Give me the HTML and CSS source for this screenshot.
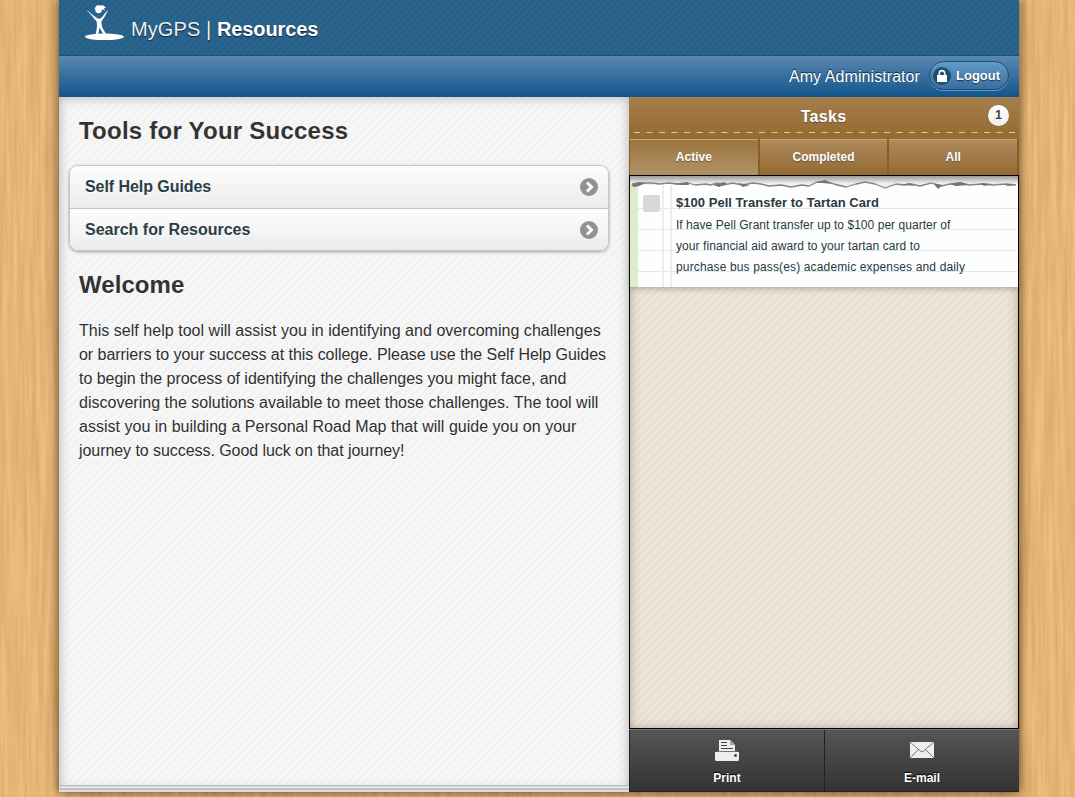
FILE: index.html
```html
<!DOCTYPE html>
<html lang="en">
<head>
<meta charset="utf-8">
<title>MyGPS | Resources</title>
<link rel="stylesheet" href="styles.css">
</head>
<body>
<svg class="wood" width="1075" height="797" aria-hidden="true">
  <filter id="grain" x="0" y="0" width="100%" height="100%" color-interpolation-filters="sRGB">
    <feTurbulence type="fractalNoise" baseFrequency="0.22 0.008" numOctaves="4" seed="7"/>
    <feColorMatrix values="0 0 0 0 0.76  0 0 0 0 0.53  0 0 0 0 0.26  0.7 0 0 0 -0.18"/>
  </filter>
  <rect width="1075" height="797" filter="url(#grain)"/>
</svg>
<div class="app">
  <header class="brand">
    <svg class="logo" width="42" height="38" viewBox="0 0 42 38" fill="#fff">
      <ellipse cx="20.500" cy="32.800" rx="19.500" ry="3.300"/>
      <path d="M2 5.800C6 8 10 12.500 13.500 14.500L16.500 14.500C19.500 12 21 8.500 24 6C22 10.500 20 14 17.500 17.500C17 22 19.500 26 23.500 31.500L20.500 31.500C18 28.500 16.500 25.500 15.500 23.500C15 26.500 14.500 29 14 32L11.500 31.500C12.500 26.500 13.500 22 12.700 17.500C9.500 14 6.500 9.500 2 5.800Z"/>
      <path d="M10.500 4.500L13 1.200L19.500 1.500L21.800 3.500L20 4.600L21 7.500L19.200 5.200L18 5.800C18 8 16.500 9.300 14.300 9.200C11.800 9 11 7 11.300 5Z"/>
    </svg>
    <h1 class="title">MyGPS | <b>Resources</b></h1>
  </header>
  <div class="userbar">
    <span class="username">Amy Administrator</span>
    <a class="logout">
      <svg width="18" height="18" viewBox="0 0 18 18"><circle cx="9" cy="9" r="9" fill="#1b4462" fill-opacity=".85"/><path d="M6.300 9V6.300a2.700 2.700 0 0 1 5.400 0V9" fill="none" stroke="#fff" stroke-width="1.600"/><rect x="4" y="8" width="10" height="7" fill="#fff"/></svg>
      <span>Logout</span>
    </a>
  </div>
  <div class="columns">
    <main class="content">
      <h2 class="heading">Tools for Your Success</h2>
      <ul class="links">
        <li><span class="l1">Self Help Guides</span><svg width="18" height="18" viewBox="0 0 18 18"><circle cx="9" cy="9" r="9" fill="#929292"/><path d="M7 4.500L11.500 9L7 13.500" fill="none" stroke="#fff" stroke-width="3"/></svg></li>
        <li><span class="l2">Search for Resources</span><svg width="18" height="18" viewBox="0 0 18 18"><circle cx="9" cy="9" r="9" fill="#929292"/><path d="M7 4.500L11.500 9L7 13.500" fill="none" stroke="#fff" stroke-width="3"/></svg></li>
      </ul>
      <h2 class="heading welcome">Welcome</h2>
      <p class="intro">
        <span class="p1">This self help tool will assist you in identifying and overcoming challenges</span>
        <span class="p2">or barriers to your success at this college. Please use the Self Help Guides</span>
        <span class="p3">to begin the process of identifying the challenges you might face, and</span>
        <span class="p4">discovering the solutions available to meet those challenges. The tool will</span>
        <span class="p5">assist you in building a Personal Road Map that will guide you on your</span>
        <span class="p6">journey to success. Good luck on that journey!</span>
      </p>
      <div class="page-edges"></div>
    </main>
    <aside class="tasks">
      <div class="tasks-head">
        <h3>Tasks</h3><span class="count">1</span>
        <svg class="stitch" width="390" height="4" viewBox="0 0 390 4"><path d="M5 1.500H388" stroke="#d9c8a8" stroke-width="1.200" stroke-dasharray="6 6.500"/></svg>
      </div>
      <nav class="tabs"><a class="active">Active</a><a>Completed</a><a>All</a></nav>
      <div class="list">
        <article class="task">
          <svg class="torn" width="388" height="14" viewBox="0 0 388 14">
            <defs><linearGradient id="fold" x2="0" y2="1"><stop stop-color="#999"/><stop offset=".6" stop-color="#eee"/><stop offset="1" stop-color="#eee"/></linearGradient></defs>
            <path fill="url(#fold)" d="M0 0H388V9L372 8L350 8L325 9L300 7L284 10L270 9L255 12L240 6L227 9L210 11L192 6L178 10L160 9L144 10L130 7L110 9L90 8L70 9L45 7L20 9L0 8Z"/>
            <path fill="none" stroke="#858585" stroke-width="1.300" stroke-linejoin="round" d="M2 8L10 7L22 7L29 8L39 7L48 8L58 7L65 9L76 8L80 9L88 7L93 9L103 7L112 9L123 7L131 8L139 10L151 9L161 11L172 9L179 10L187 6L195 5L204 8L216 11L226 8L235 6L245 8L255 12L266 8L274 9L281 8L290 10L301 7L311 10L320 8L329 7L340 9L351 8L363 9L376 8L386 9"/>
            <path fill="#757575" d="M1 9L8 6L16 7L9 10L4 11ZM42 8L58 6L59 9L51 9ZM83 9L94 6L97 8L89 11ZM108 7L120 9L113 11ZM185 7L195 4L204 8L192 7ZM270 9L280 7L284 10L276 9ZM303 7L313 9L308 13ZM319 8L331 6L339 9L326 10ZM350 7L363 8L354 10ZM373 8L386 9L378 10Z"/>
          </svg>
          <span class="checkbox"></span>
          <h4>$100 Pell Transfer to Tartan Card</h4>
          <p><span class="t1">If have Pell Grant transfer up to $100 per quarter of</span><span class="t2">your financial aid award to your tartan card to</span><span class="t3">purchase bus pass(es) academic expenses and daily</span></p>
        </article>
      </div>
      <footer class="actions">
        <a><svg width="24" height="22" viewBox="0 0 24 22"><path d="M4 0H15L20 5V12H4Z" fill="#eee"/><path d="M15 0V5H20Z" fill="#aaa"/><path d="M6 2.500H12M6 5.500H12M6 8.500H18" stroke="#444"/><path d="M0 12H24V20L23 21H1L0 20Z" fill="#eee"/><path d="M2 11.500H22" stroke="#777"/><circle cx="20.500" cy="15.500" r="1.400" fill="#444"/></svg><span>Print</span></a>
        <a><svg width="24" height="22" viewBox="0 0 24 22"><rect y="2" width="24" height="16" rx=".8" fill="#eee"/><path d="M0.500 2.500L10.500 11.200Q12 12.500 13.500 11.200L23.500 2.500M.500 17.500L8.500 9.500M23.500 17.500L15.500 9.500" fill="none" stroke="#666" stroke-width=".9"/></svg><span>E-mail</span></a>
      </footer>
    </aside>
  </div>
</div>
</body>
</html>
```
FILE: styles.css
```css
* { box-sizing: border-box; }
body { margin: 0; height: 797px; overflow: hidden; background: #edbf80; font-family: "Liberation Sans", Arial, sans-serif; color: #2f2f2f; }
h1, h2, h3, h4, p, ul { margin: 0; padding: 0; }
svg { display: block; flex: none; }
.wood { position: absolute; top: 0; left: 0; }
.app { position: relative; width: 960px; height: 792px; margin-left: 59px; display: flex; flex-direction: column; box-shadow: 0 0 10px 1px rgba(50,30,5,.7); white-space: nowrap; }
.brand { height: 56px; display: flex; padding: 4px 0 0 25px; border-bottom: 1px solid #1b5078; background: repeating-linear-gradient(135deg, #265f87 0 2px, #2a668e 3px 4px, #265f87 5px); }
.title { margin: 12px 0 0 5px; font-size: 20px; line-height: 26px; font-weight: 400; color: #eee; letter-spacing: .1px; text-shadow: 0 1px 1px #123; }
.title b { color: #fff; letter-spacing: -.13px; }
.userbar { height: 41px; display: flex; justify-content: flex-end; align-items: center; padding-right: 10px; background: linear-gradient(#5a88b3, #12558a); color: #fff; }
.username { font-size: 16px; letter-spacing: .07px; margin-right: 9px; text-shadow: 0 -1px 1px #123; }
.logout { width: 80px; height: 29px; margin-bottom: 2px; border-radius: 15px; display: flex; align-items: center; padding-left: 3px; gap: 5px; border: 1px solid #1d5072; background: linear-gradient(#5f9cc5, #3a6ca3); box-shadow: 0 1px 0 #6796bd; font-size: 13px; font-weight: 700; text-shadow: 0 1px 1px #234; }
.columns { flex: 1; display: flex; }
.content { width: 570px; display: flex; flex-direction: column; background: repeating-linear-gradient(135deg, #f6f6f6 0 3px, #f1f1f1 4px 5px, #f6f6f6 6px); box-shadow: inset 0 0 12px rgba(0,0,0,.28); }
.heading { margin: 18px 0 0 20px; font-size: 24px; line-height: 32px; color: #333; letter-spacing: .24px; text-shadow: 0 1px 0 #fff; }
.links { list-style: none; margin: 18px 20px 0 10px; border: 1px solid #c5c5c5; border-radius: 9px; overflow: hidden; box-shadow: 0 1px 3px rgba(0,0,0,.35); }
.links li { height: 42px; display: flex; justify-content: space-between; align-items: center; padding: 0 10px 0 15px; font-size: 16px; font-weight: 700; color: #2b3d46; background: linear-gradient(#fdfdfd, #ececec); text-shadow: 0 1px 0 #fff; }
.links li + li { border-top: 1px solid #c5c5c5; }
.l1 { letter-spacing: -.06px; }
.welcome { margin-top: 18px; letter-spacing: .05px; }
.intro { margin: 18px 0 0 20px; font-size: 16px; line-height: 24px; text-shadow: 0 1px 0 #fff; }
.intro span { display: block; }
.p1 { letter-spacing: .03px; }
.p4 { letter-spacing: .015px; }
.p2, .p3 { letter-spacing: -.04px; }
.p6 { letter-spacing: -.06px; }
.p5 { letter-spacing: .015px; }
.page-edges { margin-top: auto; height: 7px; background: linear-gradient(#bfc0c2 0 1px, #d5d5d7 1px 2px, #eee 2px 3px, #c0c1c3 3px 5px, #ddd 5px); }
.tasks { width: 390px; display: flex; flex-direction: column; }
.tasks-head { height: 42px; display: flex; flex-wrap: wrap; background: linear-gradient(#a67e4c, #946a30); color: #fff; }
.tasks-head h3 { width: 359px; padding-left: 30px; text-align: center; font-size: 16px; letter-spacing: .3px; line-height: 20px; margin-top: 10px; text-shadow: 0 1px 1px #654; }
.count { margin-top: 8px; width: 21px; height: 21px; border-radius: 50%; background: linear-gradient(#fff, #eee); color: #444; font-size: 12.500px; font-weight: 700; line-height: 20px; text-align: center; box-shadow: 0 0 1px #765; }
.tabs { height: 37px; display: flex; gap: 2px; padding: 0 2px 1px 1px; background: #87601f; }
.tabs a { flex: 1; text-align: center; font-size: 12px; font-weight: 700; line-height: 34px; color: #fff; border-top: 1px solid #c6a576; background: linear-gradient(#ad8a5c, #946a33); text-shadow: 0 1px 1px #654; }
.tabs .active { background: linear-gradient(#9c7540, #b19266); }
.list { height: 554px; margin-top: -1px; border: 1px solid #000; background: repeating-linear-gradient(135deg, #ebe4d9 0 3px, #e6ded2 4px 5px, #ebe4d9 6px); box-shadow: inset 0 0 10px rgba(70,50,20,.35); }
.task { position: relative; height: 111px; padding: 17px 0 0 46px; color: #2b3840; box-shadow: 0 2px 5px rgba(60,50,30,.3); background: linear-gradient(90deg, #dcedc8 0 8px, transparent 8px 32px, #f3eaed 32px 34px, transparent 34px 40px, #f3eaed 40px 42px, transparent 42px), repeating-linear-gradient(#fefefe 0 20px, #d9ebf5 20px 21px) 0 12px / 100% 84px no-repeat, #fefefe; }
.torn { position: absolute; top: 0; left: 0; }
.checkbox { position: absolute; left: 13px; top: 19px; width: 17px; height: 17px; border-radius: 2px; background: #d8d8d8; }
.task h4 { font-size: 13px; line-height: 20px; letter-spacing: .03px; }
.task p { font-size: 12px; line-height: 21px; margin-top: 2px; }
.task p span { display: block; }
.t1 { letter-spacing: .04px; }
.t2 { letter-spacing: .08px; }
.t3 { letter-spacing: .14px; }
.actions { height: 63px; display: flex; background: linear-gradient(#555, #333); border-top: 1px solid #777; }
.actions a { flex: 1; display: flex; flex-direction: column; align-items: center; padding-top: 10px; gap: 8px; color: #fff; font-size: 12px; font-weight: 700; line-height: 16px; text-shadow: 0 -1px 1px #000; border: solid #222; border-width: 0 0 1px 1px; }
```
